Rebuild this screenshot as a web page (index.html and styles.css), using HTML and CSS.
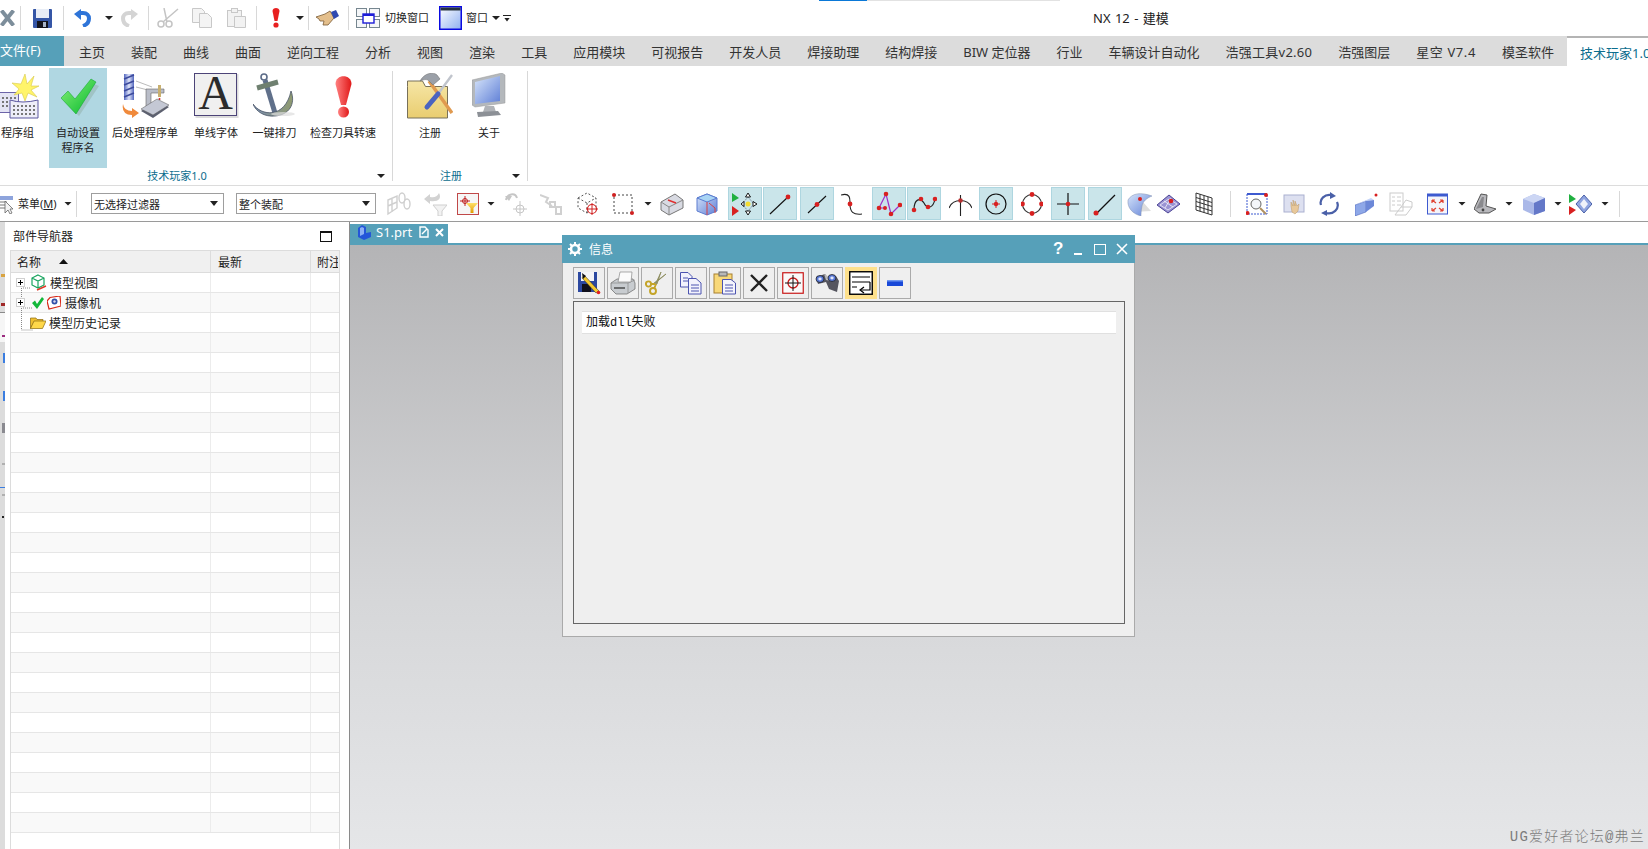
FILE: index.html
```html
<!DOCTYPE html>
<html lang="zh-CN">
<head>
<meta charset="utf-8">
<title>NX 12 - 建模</title>
<link rel="stylesheet" href="styles.css">
</head>
<body>
<div class="app">
  <svg width="0" height="0" class="defs">
    <defs>
      <linearGradient id="gGreen" x1="0" y1="0" x2="1" y2="1"><stop offset="0" stop-color="#8cf07a"/><stop offset="1" stop-color="#00b82a"/></linearGradient>
      <linearGradient id="gBlue" x1="0" y1="0" x2="1" y2="1"><stop offset="0" stop-color="#d6e4fa"/><stop offset="1" stop-color="#5f7fd6"/></linearGradient>
      <linearGradient id="gWin" x1="0" y1="0" x2="1" y2="1"><stop offset="0" stop-color="#ffffff"/><stop offset="1" stop-color="#8fb0f0"/></linearGradient>
      <linearGradient id="gRed" x1="0" y1="0" x2="1" y2="0"><stop offset="0" stop-color="#ff8080"/><stop offset="1" stop-color="#e01818"/></linearGradient>
      <linearGradient id="gDrill" x1="0" y1="0" x2="1" y2="0"><stop offset="0" stop-color="#5468c0"/><stop offset=".5" stop-color="#dfe4f8"/><stop offset="1" stop-color="#5468c0"/></linearGradient>
      <linearGradient id="gAnchor" x1="0" y1="0" x2="1" y2="0"><stop offset="0" stop-color="#7b8fb0"/><stop offset="1" stop-color="#8f9a70"/></linearGradient>
      <linearGradient id="gFolder" x1="0" y1="0" x2="0" y2="1"><stop offset="0" stop-color="#f6e6a6"/><stop offset="1" stop-color="#e9cd70"/></linearGradient>
      <linearGradient id="gGold" x1="0" y1="0" x2="0" y2="1"><stop offset="0" stop-color="#ffe16a"/><stop offset="1" stop-color="#e29a00"/></linearGradient>
    </defs>
  </svg>

  <header class="titlebar">
    <div class="line-indicator"></div>
    <div class="qa qa-logo">
      <svg width="15" height="16" viewBox="0 0 15 16"><path d="M1.5 0.5 13.5 15.5M13.5 0.5 1.5 15.5" stroke="#7d8e9b" stroke-width="4" fill="none"/></svg>
    </div>
    <div class="qa qa-save">
      <svg width="19" height="19" viewBox="0 0 19 19"><rect width="19" height="19" rx="1" fill="#3556a6"/><rect x="3" width="13" height="9" fill="#e8edf6"/><rect x="4" y="12" width="11" height="7" fill="#14141c"/><rect x="10" y="13" width="3" height="5" fill="#a8b4c8"/></svg>
    </div>
    <div class="qa qa-undo">
      <svg width="18" height="18" viewBox="0 0 18 18"><path d="M9 17C17 14 17 4 9 4H5" fill="none" stroke="#2e74d8" stroke-width="4"/><path d="M0 5 7 0V11Z" fill="#2e74d8"/></svg>
      <span class="caret nudge"></span>
      <svg width="18" height="18" viewBox="0 0 18 18"><path d="M9 17C1 14 1 4 9 4H13" fill="none" stroke="#d4d4d4" stroke-width="4"/><path d="M18 5 11 0V11Z" fill="#d4d4d4"/></svg>
    </div>
    <div class="qa qa-edit">
      <svg width="23" height="20" viewBox="0 0 23 20"><g fill="none" stroke="#c4c4c4" stroke-width="1.5"><circle cx="4" cy="16" r="3"/><circle cx="12" cy="16" r="3"/><path d="M6 14 21 1M10 14 7 0"/></g></svg>
      <svg width="23" height="20" viewBox="0 0 23 20"><g fill="#f4f4f4" stroke="#c8c8c8"><path d="M.5.5h9l3 3v11H.5z"/><path d="M7.5 5.5h8l4 4v10h-12z"/></g></svg>
      <svg width="20" height="20" viewBox="0 0 20 20"><g fill="#f2f2f2" stroke="#c8c8c8"><rect x=".5" y="2.5" width="14" height="16"/><rect x="4.5" y=".5" width="6" height="4"/><path d="M7.5 8.5h11v11h-11z"/></g></svg>
    </div>
    <div class="qa qa-check">
      <svg width="10" height="20" viewBox="0 0 10 20"><path d="M1.5 3C1.5-1 8.5-1 8.5 3L6.5 13H3.5Z" fill="#e82020"/><circle cx="5" cy="17" r="2.6" fill="#e82020"/></svg>
      <span class="caret"></span>
    </div>
    <div class="qa qa-hand">
      <svg width="23" height="16" viewBox="0 0 23 16"><path d="M0 7 9 4 14 1 18 8 12 15H7L8 11 4 11 3 9Z" fill="#e4bf8c" stroke="#7a5a36" stroke-width=".8"/><path d="M15 2 20 0 23 6 18 9Z" fill="#2f48b0"/></svg>
    </div>
    <div class="qa qa-window">
      <svg width="24" height="20" viewBox="0 0 24 20"><g fill="#f4f6f8" stroke="#76868f"><rect x=".5" y=".5" width="10" height="8"/><rect x="13.5" y=".5" width="10" height="8"/><rect x=".5" y="11.5" width="10" height="8"/><rect x="13.5" y="11.5" width="10" height="8"/></g><rect x="7" y="6" width="11" height="9" fill="#fff" stroke="#1c1cd8" stroke-width="1.4"/><rect x="7" y="6" width="11" height="2" fill="#1c1cd8"/></svg>
      <span class="qa-text">切换窗口</span>
      <svg class="g10" width="23" height="24" viewBox="0 0 23 24"><rect x=".75" y=".75" width="21.5" height="22.5" fill="url(#gWin)" stroke="#0a0ae0" stroke-width="1.5"/><rect x="1.5" y="1.5" width="20" height="3" fill="#26323c"/></svg>
      <span class="qa-text g4">窗口</span>
      <span class="caret g4"></span>
      <span class="more g3"></span>
    </div>
    <div class="app-title">NX 12 - 建模</div>
  </header>

  <nav class="tabs">
    <div class="tab-file">文件(F)</div>
    <div class="tab-list">
      <span class="tab">主页</span><span class="tab">装配</span><span class="tab">曲线</span><span class="tab">曲面</span><span class="tab">逆向工程</span><span class="tab">分析</span><span class="tab">视图</span><span class="tab">渲染</span><span class="tab">工具</span><span class="tab">应用模块</span><span class="tab">可视报告</span><span class="tab">开发人员</span><span class="tab">焊接助理</span><span class="tab">结构焊接</span><span class="tab">BIW 定位器</span><span class="tab">行业</span><span class="tab">车辆设计自动化</span><span class="tab tab-ver">浩强工具v2.60</span><span class="tab">浩强图层</span><span class="tab tab-star">星空 V7.4</span><span class="tab">模圣软件</span><span class="tab tab-active">技术玩家1.0</span>
    </div>
  </nav>

  <section class="ribbon">
    <div class="rgroup rgroup-main">
      <div class="ritems">
        <div class="ritem r-prog">
          <div class="ricon"><svg width="43" height="46" viewBox="0 0 43 46"><path d="M0.5 19.5h22v20H0.5z" fill="#e4e4f4" stroke="#6c64a8"/><path d="M2 25h18M2 29h18M2 33h18" stroke="#777" stroke-width="2" stroke-dasharray="2 2"/><path d="M14 27q12 4 28 0v18H14z" fill="#eeeef8" stroke="#5c58a0"/><path d="M17 33h22M17 37h22M17 41h22" stroke="#777" stroke-width="2" stroke-dasharray="2 2"/><path d="M29 1 31 11 38 3 35 13 43 13 35 17 41 24 32 20 29 28 26 20 18 22 23 16 16 10 25 11Z" fill="#fff46a" stroke="#d6c84a" stroke-width=".6"/></svg></div>
          <div class="rlabel">程序组</div>
        </div>
        <div class="ritem r-auto">
          <div class="ricon ricon-check"><svg width="40" height="38" viewBox="0 0 40 38"><path d="M3 23 10 17 17 26 33 6 38 8 18 38Z" fill="#8fb0a8" opacity=".5"/><path d="M0 20 7 13 14 21 30 1 35 4 15 36Z" fill="url(#gGreen)" stroke="#0ba02a" stroke-width=".5"/></svg></div>
          <div class="rlabel">自动设置</div><div class="rlabel">程序名</div>
        </div>
        <div class="ritem r-post">
          <div class="ricon"><svg width="47" height="46" viewBox="0 0 47 46"><rect x="2" y="1" width="10" height="26" fill="url(#gDrill)"/><path d="M2 6 12 2M2 12 12 8M2 18 12 14M2 24 12 20" stroke="#3c4a9c" stroke-width="1.4"/><path d="M14 8 30 14M14 14 30 18" stroke="#bbb"/><path d="M24 37V16H42V20H29V34Z" fill="#b9bdc8" stroke="#666" stroke-width=".6"/><rect x="36" y="12" width="3" height="12" fill="#c8b070"/><circle cx="37.500" cy="26" r="1" fill="#d02020"/><path d="M19 38 35 28 47 34 31 45Z" fill="#5c6070"/><path d="M19 36 35 26 47 32 31 42Z" fill="#c4c8d4" stroke="#555" stroke-width=".5"/><path d="M1 31q1 7 9 7v-3l7 5-7 5v-3Q-1 42 1 31Z" fill="#f08a3c"/></svg></div>
          <div class="rlabel">后处理程序单</div>
        </div>
        <div class="ritem r-font">
          <div class="ricon"><svg class="svg-open" width="44" height="45" viewBox="0 0 44 45"><rect x="1.500" y="1" width="43" height="44" fill="#dcdcdc"/><rect x=".5" y=".5" width="42" height="42" fill="#f0f0f0" stroke="#4c4478"/><text x="21.500" y="36" text-anchor="middle" class="glyph-a">A</text></svg></div>
          <div class="rlabel">单线字体</div>
        </div>
        <div class="ritem r-anchor">
          <div class="ricon"><svg width="43" height="44" viewBox="0 0 43 44"><circle cx="11" cy="4" r="3" fill="none" stroke="#5c6c88" stroke-width="1.6"/><path d="M12 7 22 40" stroke="#60708a" stroke-width="5"/><path d="M4 15 25 9" stroke="#6f8070" stroke-width="5"/><path d="M0 31C8 43 32 46 38 18 43 31 36 42 22 43 12 44 3 39 0 31Z" fill="url(#gAnchor)" stroke="#4a5668" stroke-width=".8"/><ellipse cx="30" cy="41" rx="12" ry="2" fill="#ddd" opacity=".7"/></svg></div>
          <div class="rlabel">一键排刀</div>
        </div>
        <div class="ritem r-speed">
          <div class="ricon ricon-bang"><svg width="17" height="42" viewBox="0 0 17 42"><path d="M.5 8C.5-2.500 16.500-2.500 16.500 8L11 29H6Z" fill="url(#gRed)"/><circle cx="8.500" cy="36" r="5.500" fill="url(#gRed)"/></svg></div>
          <div class="rlabel">检查刀具转速</div>
        </div>
      </div>
      <div class="rgroup-label"><span class="rgroup-name">技术玩家1.0</span><span class="caret"></span></div>
    </div>
    <div class="rsep"></div>
    <div class="rgroup rgroup-reg">
      <div class="ritems">
        <div class="ritem r-reg">
          <div class="ricon"><svg width="46" height="46" viewBox="0 0 46 46"><path d="M.5 13.500V8h15l3 5.500h22V45H.5Z" fill="url(#gFolder)" stroke="#77705a"/><path d="M45 40 22 8" stroke="#e09a50" stroke-width="3.500"/><path d="M13 8C18-1 27-1 30 2L33 6 26 12 21 7C18 6 16 7 13 8Z" fill="#9ba0a8" stroke="#666" stroke-width=".5"/><path d="M45 2 31 21" stroke="#c0c4cc" stroke-width="2.400"/><path d="M31 21 20 34" stroke="#4a64c0" stroke-width="5" stroke-linecap="round"/></svg></div>
          <div class="rlabel">注册</div>
        </div>
        <div class="ritem r-about">
          <div class="ricon"><svg width="34" height="45" viewBox="0 0 34 45"><path d="M0 7 30 0 33 2V30L3 34 0 32Z" fill="#b4b8bc" stroke="#999" stroke-width=".5"/><path d="M3 9 28 3V28L3 31Z" fill="url(#gBlue)"/><path d="M13 33H22L24 39H11Z" fill="#b0b3b8"/><path d="M5 39 26 38 29 42 6 44Z" fill="#8c9096"/></svg></div>
          <div class="rlabel">关于</div>
        </div>
      </div>
      <div class="rgroup-label"><span class="rgroup-name">注册</span><span class="caret"></span></div>
    </div>
    <div class="rsep"></div>
  </section>

  <section class="toolbar">
    <svg width="13" height="20" viewBox="0 0 13 20"><rect y="2" width="13" height="4" fill="#8ea4dc"/><path d="M0 8h7M0 11h7M0 14h7" stroke="#777"/><path d="M5 7 5 19 8 16 10 20 12 19 10 15 13 15Z" fill="#f4f4f4" stroke="#666" stroke-width=".8"/></svg>
    <span class="tb-text g5">菜单(<u>M</u>)</span>
    <span class="caret g6"></span>
    <span class="tsep g4"></span>
    <div class="combo combo-filter g14"><span>无选择过滤器</span><i class="combo-caret"></i></div>
    <div class="combo combo-scope g12"><span>整个装配</span><i class="combo-caret"></i></div>
    <svg class="g11" width="24" height="24" viewBox="0 0 24 24"><g fill="none" stroke="#cfcfcf" stroke-width="1.400"><path d="M1 8 10 4V16L1 22ZM1 14 10 10M5 6V20"/><ellipse cx="15" cy="6" rx="3" ry="5"/><ellipse cx="20" cy="12" rx="3" ry="5"/></g></svg>
    <svg class="g13" width="23" height="24" viewBox="0 0 23 24"><path d="M15 1C18 7 14 10 6 9V12L0 7 6 2V5C10 6 13 5 15 1Z" fill="#d2d2d2"/><path d="M9 13H23L18 19V24H14V19Z" fill="#f2f2f2" stroke="#cfcfcf"/></svg>
    <div class="g10 box-red"><svg width="20" height="20" viewBox="0 0 20 20"><path d="M2 7H12M7 2V12" stroke="#c02020"/><circle cx="7" cy="7" r="2.500" fill="none" stroke="#c02020"/><path d="M8 9H20L15.500 14V19H12.500V14Z" fill="url(#gGold)"/></svg></div>
    <span class="caret g8"></span>
    <svg class="g10" width="22" height="24" viewBox="0 0 22 24"><path d="M1 8C2 2 10 0 12 6" fill="none" stroke="#c6c6c6" stroke-width="2"/><path d="M0 4 4 9 7 4Z" fill="#c6c6c6"/><g fill="none" stroke="#c6c6c6"><circle cx="15" cy="17" r="4"/><path d="M15 9V24M8 17H22"/></g></svg>
    <svg class="g13" width="23" height="24" viewBox="0 0 23 24"><g fill="none" stroke="#d0d0d0" stroke-width="2"><path d="M0 3 8 6 6 10 12 14"/><rect x="10" y="10" width="5" height="5"/><rect x="16" y="15" width="5" height="7"/></g></svg>
    <svg class="g14" width="21" height="24" viewBox="0 0 21 24"><g fill="none" stroke="#555" stroke-dasharray="2 2"><path d="M1 6 10 1 19 6V16L10 21 1 16ZM1 6 10 11 19 6M10 11V21"/></g><circle cx="15" cy="17" r="4.500" fill="#fff" stroke="#d02020" stroke-width="1.200"/><path d="M15 11V23M9 17H21" stroke="#d02020"/></svg>
    <svg class="g14" width="22" height="24" viewBox="0 0 22 24"><rect x="2" y="3" width="18" height="18" fill="none" stroke="#444" stroke-dasharray="2 2"/><circle cx="2" cy="3" r="2" fill="#d02020"/><circle cx="20" cy="21" r="2" fill="#d02020"/></svg>
    <span class="caret g10"></span>
    <svg class="g8" width="24" height="24" viewBox="0 0 24 24"><path d="M1 10 15 2 23 8V16L9 23 1 18Z" fill="#d8dae2" stroke="#777"/><path d="M1 10 9 15V23M9 15 23 8" fill="none" stroke="#888"/><path d="M8 8 16 11" stroke="#e03030" stroke-width="1.600"/></svg>
    <svg class="g12" width="22" height="24" viewBox="0 0 22 24"><path d="M1 6 11 2 21 6V19L11 23 1 19Z" fill="url(#gBlue)" stroke="#5c7cd0"/><path d="M1 6 11 10 21 6 11 2Z" fill="#a8d4f4" stroke="#5c7cd0"/><path d="M11 10V23M13 11 19 16V21" fill="none" stroke="#d84040"/></svg>
    <div class="hl g10"><svg width="26" height="26" viewBox="0 0 26 26"><path d="M0 2 7 7 0 11Z" fill="#20b040"/><path d="M0 15 7 20 0 25Z" fill="#d82020"/><path d="M16 6 22 13 16 20 10 13Z" fill="none" stroke="#8090a0" stroke-dasharray="2 1"/><circle cx="16" cy="13" r="2.500" fill="#f4dc30"/><path d="M16 2 13.500 6H18.500ZM16 24 13.500 20H18.500ZM9 13 12 10.500V15.500ZM25 13 21 10.500V15.500Z" fill="#fff" stroke="#000" stroke-width=".9"/></svg></div>
    <div class="hl g1"><svg width="24" height="24" viewBox="0 0 24 24"><path d="M2 22 21 4" stroke="#111" stroke-width="1.100"/><circle cx="20" cy="5" r="2.400" fill="#d82020"/></svg></div>
    <div class="hl g3"><svg width="24" height="24" viewBox="0 0 24 24"><path d="M3 21 21 4" stroke="#111" stroke-width="1.100"/><circle cx="12" cy="12.500" r="2.400" fill="#d82020"/></svg></div>
    <svg class="g7" width="21" height="24" viewBox="0 0 21 24"><path d="M0 3C10 0 9 8 9 12 9 20 12 23 21 22" fill="none" stroke="#222" stroke-width="1.100"/><circle cx="9" cy="12" r="2.400" fill="#d82020"/></svg>
    <div class="hl g10"><svg width="26" height="26" viewBox="0 0 26 26"><path d="M3 17 10 3 15 23 24 14" fill="none" stroke="#a030c8" stroke-width="1.200"/><path d="M3 17H10" stroke="#a030c8"/><g fill="#d82020"><circle cx="3" cy="17" r="2.300"/><circle cx="10" cy="3" r="2.300"/><circle cx="15" cy="23" r="2.300"/><circle cx="24" cy="14" r="2.300"/><circle cx="9" cy="17" r="2"/></g></svg></div>
    <div class="hl g1"><svg width="26" height="26" viewBox="0 0 26 26"><path d="M3 19C3 8 9 6 13 12 16 18 22 18 24 8" fill="none" stroke="#222" stroke-width="1.200"/><g fill="#d82020"><circle cx="3" cy="19" r="2.300"/><circle cx="10" cy="8" r="2.300"/><circle cx="17" cy="16" r="2.300"/><circle cx="24" cy="8" r="2.300"/></g></svg></div>
    <svg class="g8" width="23" height="24" viewBox="0 0 23 24"><path d="M0 16C4 6 19 6 23 16M11.500 3V24" fill="none" stroke="#222" stroke-width="1.100"/><circle cx="11.500" cy="8.500" r="2.300" fill="#b83030"/></svg>
    <div class="hl g7"><svg width="24" height="24" viewBox="0 0 24 24"><circle cx="12" cy="12" r="10" fill="none" stroke="#111" stroke-width="1.200"/><path d="M12 8V16M8 12H16" stroke="#d82020"/><circle cx="12" cy="12" r="2.200" fill="#d82020"/></svg></div>
    <svg class="g8" width="22" height="24" viewBox="0 0 22 24"><circle cx="11" cy="12" r="9.500" fill="none" stroke="#333" stroke-width="1.100"/><g fill="#d82020"><circle cx="11" cy="2.500" r="2.400"/><circle cx="11" cy="21.500" r="2.400"/><circle cx="1.500" cy="12" r="2.400"/><circle cx="20.500" cy="12" r="2.400"/></g></svg>
    <div class="hl g8"><svg width="24" height="24" viewBox="0 0 24 24"><path d="M12 1V23M1 12H23" stroke="#111" stroke-width="1.200"/><circle cx="12" cy="12" r="2.300" fill="#d82020"/></svg></div>
    <div class="hl g3"><svg width="26" height="24" viewBox="0 0 26 24"><path d="M4 22 23 3" stroke="#111" stroke-width="1.200"/><circle cx="4" cy="21" r="2.500" fill="#d82020"/></svg></div>
    <svg class="g5" width="25" height="24" viewBox="0 0 25 24"><path d="M6 20 24 19 15 9Z" fill="#ddd"/><path d="M1 8C5 1 14 0 25 4 20 6 16 9 15 14 14 19 14 22 14 24 6 22 0 16 1 8Z" fill="url(#gBlue)" stroke="#8090b0" stroke-width=".5"/><circle cx="13" cy="7" r="2" fill="#d82020"/></svg>
    <svg class="g5" width="23" height="24" viewBox="0 0 23 24"><path d="M0 13 12 3 23 12 11 21Z" fill="#9a94d4" stroke="#4c4494"/><path d="M3 13 12 7 20 12 11 18ZM7 9 16 15M14 6 8 16" fill="none" stroke="#fff" stroke-width=".7"/><circle cx="14" cy="9" r="2.300" fill="#d82020"/></svg>
    <svg class="g15" width="18" height="24" viewBox="0 0 18 24"><g fill="none" stroke="#333"><path d="M1 1 17 6V23L1 18ZM1 5.500 17 10.500M1 9.500 17 14.500M1 14 17 19M5 2.300V19.300M9 3.500V20.500M13 4.800V21.800"/></g></svg>
    <span class="tsep g17"></span>
    <svg class="g15" width="22" height="24" viewBox="0 0 22 24"><rect x="1" y="2" width="20" height="20" fill="#fff" stroke="#3d5ad0" stroke-dasharray="2 1"/><rect x="1" y="1" width="20" height="2" fill="#3d5ad0"/><circle cx="10" cy="12" r="5" fill="#f4f6fa" stroke="#666"/><path d="M14 16 20 22" stroke="#b09060" stroke-width="2"/><circle cx="20" cy="3" r="2" fill="#d82020"/><circle cx="1.500" cy="21" r="2" fill="#d82020"/></svg>
    <svg class="g15" width="22" height="24" viewBox="0 0 22 24"><rect x="1" y="3" width="20" height="17" fill="#dde0f0" stroke="#aab0d0"/><path d="M8 14V10L10 14V8L12 14V9L14 14 16 12 15 19 12 22 9 20Z" fill="#e8c89a" stroke="#b89868" stroke-width=".5"/></svg>
    <svg class="g13" width="22" height="24" viewBox="0 0 22 24"><path d="M3 13C1 7 7 2 13 3M19 10C22 17 15 23 8 21" fill="none" stroke="#4a60a8" stroke-width="2.200"/><path d="M12 0 18 4 12 7ZM9 18 3 21 9 24Z" fill="#4a60a8"/></svg>
    <svg class="g15" width="23" height="24" viewBox="0 0 23 24"><path d="M0 13 11 9V20L0 24Z" fill="#8ea8e8" stroke="#3d56b0" stroke-width=".5"/><path d="M0 13 16 6 19 8 11 9Z" fill="#c4d4f8"/><path d="M11 9 19 8V14L11 20Z" fill="#6c88d8"/><circle cx="21" cy="3" r="1.500" fill="#d82020"/></svg>
    <svg class="g11" width="24" height="24" viewBox="0 0 24 24"><g fill="none" stroke="#cccccc"><rect x="1" y="1" width="13" height="18"/><path d="M3 5H6M8 5H12M3 9H6M8 9H12M3 13H6M8 13H12"/><path d="M6 23 12 15H23L17 23ZM23 15V10L17 8 12 15"/></g></svg>
    <svg class="g14" width="21" height="24" viewBox="0 0 21 24"><rect x=".5" y="2" width="20" height="20" fill="#f4f4fa" stroke="#3d5ad0"/><rect x=".5" y="2" width="20" height="2.500" fill="#3d5ad0"/><path d="M5 8 9 11M5 8V11M5 8H8M16 8 12 11M16 8V11M16 8H13M5 19 9 16M5 19V16M5 19H8M16 19 12 16M16 19V16M16 19H13" fill="none" stroke="#e04030" stroke-width="1.200"/></svg>
    <span class="caret g10"></span>
    <svg class="g8" width="22" height="24" viewBox="0 0 22 24"><path d="M0 17 7 2 13 3 12 14 22 17 15 21 5 21Z" fill="#b8b8bc" stroke="#555"/><path d="M2 17 8 5 10 5 9 15Z" fill="#8a8a8e"/><circle cx="9" cy="18" r="1.400" fill="#444"/></svg>
    <span class="caret g9"></span>
    <svg class="g10" width="22" height="24" viewBox="0 0 22 24"><path d="M0 7 11 2 22 6V19L11 23 0 18Z" fill="#aab8e8"/><path d="M0 7 11 11 22 6 11 2Z" fill="#ccd6f4"/><path d="M11 11 22 6V19L11 23Z" fill="#6478c8"/></svg>
    <span class="caret g9"></span>
    <svg class="g7" width="23" height="24" viewBox="0 0 23 24"><path d="M0 2 7 7 0 11Z" fill="#20b040"/><path d="M0 14 7 18 0 23Z" fill="#d82020"/><path d="M15 3 23 12 15 21 7 12Z" fill="#8fa4e0" stroke="#4a60a8"/><path d="M15 7 19 12 15 17 11 12Z" fill="#f0f2fa"/></svg>
    <span class="caret g9"></span>
    <span class="tsep g10"></span>
  </section>

  <main class="workspace">
    <svg class="edge" width="5" height="627" viewBox="0 0 5 627"><rect width="5" height="627" fill="#dcdcdc"/><rect y="90" width="5" height="30" fill="#f6f6f6"/><rect y="90" width="5" height="1" fill="#8a8a8a"/><rect x="1" y="52" width="4" height="3" fill="#d9a441"/><rect x="1" y="81" width="4" height="3" fill="#a02828"/><rect x="2" y="113" width="3" height="2" fill="#9c2c80"/><rect x="3" y="131" width="2" height="10" fill="#3a7de0"/><rect x="3" y="169" width="2" height="10" fill="#3a7de0"/><rect x="2" y="201" width="3" height="10" fill="#8a8a90"/><rect x="2" y="241" width="3" height="2" fill="#b0b0b0"/><rect y="265" width="5" height="1" fill="#3a7de0"/><rect x="2" y="272" width="3" height="2" fill="#b0b0b0"/><rect x="2" y="294" width="2" height="2" fill="#222"/></svg>

    <aside class="panel">
      <div class="panel-head">
        <span>部件导航器</span>
        <span class="panel-max"></span>
      </div>
      <div class="grid">
        <svg class="tree-lines" width="20" height="60" viewBox="0 0 20 60"><path d="M8.500 0V52H20M10 10H18M10 30H20" fill="none" stroke="#8a8a8a" stroke-dasharray="1 1"/></svg>
        <div class="row row-head"><div class="cell">名称<i class="sort"></i></div><div class="cell cell-new">最新</div><div class="cell cell-note">附注</div></div>
        <div class="row"><div class="cell"><span class="plus"></span>
          <svg class="g5" width="17" height="17" viewBox="0 0 17 17"><path d="M8 1 14 4V11L8 14 2 11V4ZM2 4 8 7 14 4M8 7V14" fill="none" stroke="#1aa560" stroke-width="1.200"/><path d="M7 16 16 12" stroke="#e03828" stroke-width="1.400"/></svg>
          <span class="g3">模型视图</span></div><div class="cell"></div><div class="cell"></div></div>
        <div class="row"><div class="cell"><span class="plus"></span>
          <svg class="g7" width="12" height="12" viewBox="0 0 12 12"><path d="M0 6 3 3.500 5 7 10 0 12 2 5 12Z" fill="#12b83a"/></svg>
          <svg class="g3" width="14" height="14" viewBox="0 0 14 14"><path d="M3 1.500 13 0 14 10 2 13 0 5Z" fill="#fff" stroke="#d82818" stroke-width="1.200"/><circle cx="7.500" cy="5.500" r="3" fill="#3050a8"/><circle cx="7.500" cy="5.500" r="1.200" fill="#d8d8f0"/></svg>
          <span class="g4">摄像机</span></div><div class="cell"></div><div class="cell"></div></div>
        <div class="row"><div class="cell tree-leaf">
          <svg width="16" height="13" viewBox="0 0 16 13"><path d="M.5 12.500V2H6L7 3.500H13V6H4Z" fill="#f0c030" stroke="#8a6a10" stroke-width=".7"/><path d="M.5 12.500 4 5H16L12.500 12.500Z" fill="#ffd84a" stroke="#8a6a10" stroke-width=".7"/></svg>
          <span class="g3">模型历史记录</span></div><div class="cell"></div><div class="cell"></div></div>
        <div class="row"><div class="cell"></div><div class="cell"></div><div class="cell"></div></div>
        <div class="row"><div class="cell"></div><div class="cell"></div><div class="cell"></div></div>
        <div class="row"><div class="cell"></div><div class="cell"></div><div class="cell"></div></div>
        <div class="row"><div class="cell"></div><div class="cell"></div><div class="cell"></div></div>
        <div class="row"><div class="cell"></div><div class="cell"></div><div class="cell"></div></div>
        <div class="row"><div class="cell"></div><div class="cell"></div><div class="cell"></div></div>
        <div class="row"><div class="cell"></div><div class="cell"></div><div class="cell"></div></div>
        <div class="row"><div class="cell"></div><div class="cell"></div><div class="cell"></div></div>
        <div class="row"><div class="cell"></div><div class="cell"></div><div class="cell"></div></div>
        <div class="row"><div class="cell"></div><div class="cell"></div><div class="cell"></div></div>
        <div class="row"><div class="cell"></div><div class="cell"></div><div class="cell"></div></div>
        <div class="row"><div class="cell"></div><div class="cell"></div><div class="cell"></div></div>
        <div class="row"><div class="cell"></div><div class="cell"></div><div class="cell"></div></div>
        <div class="row"><div class="cell"></div><div class="cell"></div><div class="cell"></div></div>
        <div class="row"><div class="cell"></div><div class="cell"></div><div class="cell"></div></div>
        <div class="row"><div class="cell"></div><div class="cell"></div><div class="cell"></div></div>
        <div class="row"><div class="cell"></div><div class="cell"></div><div class="cell"></div></div>
        <div class="row"><div class="cell"></div><div class="cell"></div><div class="cell"></div></div>
        <div class="row"><div class="cell"></div><div class="cell"></div><div class="cell"></div></div>
        <div class="row"><div class="cell"></div><div class="cell"></div><div class="cell"></div></div>
        <div class="row"><div class="cell"></div><div class="cell"></div><div class="cell"></div></div>
        <div class="row"><div class="cell"></div><div class="cell"></div><div class="cell"></div></div>
        <div class="row"><div class="cell"></div><div class="cell"></div><div class="cell"></div></div>
        <div class="row"><div class="cell"></div><div class="cell"></div><div class="cell"></div></div>
        <div class="row"><div class="cell"></div><div class="cell"></div><div class="cell"></div></div>
      </div>
    </aside>

    <div class="stage">
      <div class="docbar">
        <div class="doctab">
          <svg width="15" height="15" viewBox="0 0 15 15"><path d="M1 3 5 0 9 2V8L14 7V12L7 15 1 12Z" fill="#2456d8"/><path d="M3 3 5 2 7 3V9L3 11Z" fill="#8cb0f4"/></svg>
          <span class="docname">S1.prt</span>
          <svg width="10" height="12" viewBox="0 0 10 12"><path d="M1 1H6L9 4V11H1Z" fill="#56a0b9" stroke="#fff" stroke-width="1.400"/><path d="M3 8 8 3" stroke="#fff" stroke-width="1.400"/></svg>
          <svg class="g6" width="9" height="9" viewBox="0 0 9 9"><path d="M1 1 8 8M8 1 1 8" stroke="#fff" stroke-width="2"/></svg>
        </div>
      </div>
      <div class="viewport"></div>

      <div class="dialog">
        <div class="dialog-title">
          <svg width="14" height="14" viewBox="0 0 14 14"><circle cx="7" cy="7" r="4" fill="none" stroke="#fff" stroke-width="2.600"/><path d="M7 0V3M7 11V14M0 7H3M11 7H14M2 2 4 4M10 10 12 12M12 2 10 4M4 10 2 12" stroke="#fff" stroke-width="2"/></svg>
          <span class="dialog-name">信息</span>
          <span class="dialog-help">?</span>
          <span class="dialog-min"></span>
          <span class="dialog-max"></span>
          <svg class="dialog-x" width="12" height="12" viewBox="0 0 12 12"><path d="M1 1 11 11M11 1 1 11" stroke="#fff" stroke-width="1.600"/></svg>
        </div>
        <div class="dialog-tools">
          <div class="dbtn"><svg width="24" height="24" viewBox="0 0 24 24"><rect x="1" y="1" width="19" height="20" fill="#2c48a0"/><rect x="4" y="1" width="13" height="9" fill="#f4f4f8"/><rect x="5" y="13" width="9" height="8" fill="#10101c"/><path d="M7 4 22 20 19 22 5 7Z" fill="#f4c830" stroke="#222" stroke-width=".5"/><path d="M5 2 9 5 6 8Z" fill="#111"/><circle cx="21.500" cy="21.500" r="1.800" fill="#e02020"/></svg></div>
          <div class="dbtn"><svg width="26" height="24" viewBox="0 0 26 24"><path d="M1 12 7 8H23L25 12V18L17 23H6L1 18Z" fill="#c8ccd0" stroke="#666" stroke-width=".7"/><path d="M1 12H18L25 9M18 12V22" fill="none" stroke="#888" stroke-width=".7"/><path d="M10 1H22L21 11H8Z" fill="#fbfbfb" stroke="#8a8a8a" stroke-width=".7"/><path d="M4 17H15" stroke="#444" stroke-width="1.400"/></svg></div>
          <div class="dbtn"><svg width="24" height="24" viewBox="0 0 24 24"><path d="M8 14 21 3 9 12ZM10 14 16 1 12 13Z" fill="#9c9c7c" stroke="#8a8a5a" stroke-width=".8"/><g fill="none" stroke="#c4a428" stroke-width="1.900"><circle cx="8" cy="20" r="3"/><circle cx="3.500" cy="13" r="2.600"/><path d="M9 18 11 13M6 13 10 13"/></g></svg></div>
          <div class="dbtn"><svg width="22" height="24" viewBox="0 0 22 24"><g fill="#f2f2fc" stroke="#4c54b0"><path d="M.5 1.500H8L12 5.500V16H.5Z"/><path d="M8.500 7.500H16L21 12V23H8.500Z"/></g><path d="M3 7H8M3 10H8M11 14H19M11 17H19M11 20H19" stroke="#4c54b0"/></svg></div>
          <div class="dbtn"><svg width="24" height="24" viewBox="0 0 24 24"><rect x="1" y="3" width="18" height="19" fill="#f8d878" stroke="#a88030"/><rect x="6" y="1" width="8" height="4" fill="#b8b8b8" stroke="#666"/><path d="M9.500 8.500H18L22.500 12V23H9.500Z" fill="#f4f4fc" stroke="#4c54b0"/><path d="M12 14H20M12 17H20M12 20H20" stroke="#4c54b0"/></svg></div>
          <div class="dbtn"><svg width="20" height="20" viewBox="0 0 20 20"><path d="M2 2 18 18M18 2 2 18" stroke="#222" stroke-width="2.400"/></svg></div>
          <div class="dbtn"><svg width="22" height="22" viewBox="0 0 22 22"><rect x=".75" y=".75" width="20.500" height="20.500" fill="#fafafa" stroke="#c81818" stroke-width="1.200"/><circle cx="11" cy="11" r="5" fill="none" stroke="#c81818" stroke-width="1.300"/><path d="M11 3V19M3 11H19" stroke="#111"/></svg></div>
          <div class="dbtn"><svg width="24" height="22" viewBox="0 0 24 22"><path d="M1 5 10 2 13 6 21 4 24 9 22 20 14 17 11 10 3 12Z" fill="#55555f"/><path d="M9 2 14 5 16 9 11 8Z" fill="#bbb"/><ellipse cx="5" cy="7" rx="4" ry="3.500" fill="#5878d8" stroke="#222" stroke-width=".8"/><ellipse cx="17" cy="6" rx="4" ry="3.500" fill="#5878d8" stroke="#222" stroke-width=".8"/><ellipse cx="5" cy="7" rx="1.700" ry="1.400" fill="#dfe6fa"/><ellipse cx="17" cy="6" rx="1.700" ry="1.400" fill="#dfe6fa"/></svg></div>
          <div class="dbtn dbtn-on"><svg width="24" height="24" viewBox="0 0 24 24"><rect x=".75" y=".75" width="22.500" height="22.500" fill="#fff" stroke="#000" stroke-width="1.400"/><path d="M3 6H21M3 11H21M3 16H8" stroke="#000" stroke-width="1.200"/><path d="M21 11V19H12" fill="none" stroke="#000" stroke-width="1.200"/><path d="M15 16 11 19 15 22" fill="none" stroke="#000" stroke-width="1.200"/></svg></div>
          <div class="dbtn"><svg width="16" height="6" viewBox="0 0 16 6"><rect width="16" height="6" fill="#1848d8"/><rect width="16" height="1.500" fill="#7098f0"/></svg></div>
        </div>
        <div class="dialog-frame">
          <div class="dialog-line">加载dll失败</div>
        </div>
      </div>

      <div class="watermark">UG爱好者论坛@弗兰</div>
    </div>
  </main>
</div>
</body>
</html>
```

FILE: styles.css
```css
* { box-sizing: border-box; }
html, body { margin: 0; padding: 0; }
body {
  font-family: "Noto Sans", "Noto Sans CJK SC", sans-serif;
  font-size: 11px;
  color: #222;
  background: #fff;
}
svg { display: block; flex: none; }
.defs { position: absolute; }
.svg-open { overflow: visible; }

.app {
  width: 1648px;
  height: 849px;
  overflow: hidden;
  display: flex;
  flex-direction: column;
  position: relative;
}

/* spacing helpers for the icon strips */
.g1 { margin-left: 1px; } .g3 { margin-left: 3px; } .g4 { margin-left: 4px; }
.g5 { margin-left: 5px; } .g6 { margin-left: 6px; } .g7 { margin-left: 7px; }
.g8 { margin-left: 8px; } .g9 { margin-left: 9px; } .g10 { margin-left: 10px; }
.g11 { margin-left: 11px; } .g12 { margin-left: 12px; } .g13 { margin-left: 13px; }
.g14 { margin-left: 14px; } .g15 { margin-left: 15px; } .g17 { margin-left: 17px; }

.caret {
  display: block;
  flex: none;
  width: 8px;
  height: 4px;
  background: #222;
  clip-path: polygon(0 0, 100% 0, 50% 100%);
}

/* title bar */
.titlebar {
  height: 36px;
  flex: none;
  display: flex;
  align-items: center;
  position: relative;
}
.line-indicator {
  position: absolute;
  left: 819px;
  top: 0;
  width: 241px;
  height: 1px;
  background: linear-gradient(to right, #0a78d7 48px, #e2e2e2 48px);
}
.qa {
  height: 24px;
  display: flex;
  align-items: center;
  border-right: 1px solid #d8d8d8;
  flex: none;
}
.qa-logo { width: 21px; }
.qa-save { width: 43px; justify-content: center; }
.qa-undo { width: 85px; padding-left: 10px; gap: 7px; }
.qa-undo .nudge { margin-left: 6px; }
.qa-edit { width: 108px; padding-left: 8px; gap: 12px; }
.qa-check { width: 52px; padding-left: 14px; gap: 15px; }
.qa-hand { width: 40px; padding-left: 7px; }
.qa-window { border-right: 0; padding-left: 7px; }
.qa-text { font-size: 11px; line-height: 16px; color: #222; margin-left: 5px; }
.qa-text.g4 { margin-left: 4px; }
.more {
  display: block;
  width: 8px;
  height: 7px;
  border-top: 1px solid #222;
  position: relative;
}
.more::after {
  content: "";
  position: absolute;
  left: 1px;
  top: 2px;
  width: 6px;
  height: 4px;
  background: #222;
  clip-path: polygon(0 0, 100% 0, 50% 100%);
}
.app-title {
  margin-left: 582px;
  font-size: 13px;
  line-height: 18px;
  word-spacing: 1px;
  color: #222;
  white-space: nowrap;
}

/* ribbon tabs */
.tabs {
  height: 30px;
  flex: none;
  display: flex;
  background: #dcdcdc;
  overflow: hidden;
}
.tab-file {
  width: 64px;
  flex: none;
  background: #56a0b9;
  color: #fff;
  font-size: 13px;
  line-height: 28px;
}
.tab-list {
  display: flex;
  padding-left: 2px;
  flex: none;
}
.tab {
  padding: 0 13px;
  font-size: 13px;
  line-height: 32px;
  color: #333;
  white-space: nowrap;
}
.tab-ver { letter-spacing: .25px; }
.tab-star { letter-spacing: .6px; }
.tab-active {
  background: #fff;
  color: #0b6d8e;
  border-top: 2px solid #b4b4b4;
  line-height: 30px;
}

/* ribbon */
.ribbon {
  height: 120px;
  flex: none;
  display: flex;
  border-bottom: 1px solid #dcdcdc;
}
.rgroup { display: flex; flex-direction: column; flex: none; }
.rgroup-main { width: 415px; margin-left: -23px; }
.rgroup-reg { width: 134px; }
.ritems { display: flex; height: 102px; padding-top: 2px; }
.ritem {
  height: 100px;
  flex: none;
  display: flex;
  flex-direction: column;
  align-items: center;
  padding-top: 5px;
}
.ricon {
  height: 46px;
  margin-bottom: 6px;
  display: flex;
  align-items: flex-start;
  justify-content: center;
}
.ricon-check { padding-top: 5px; padding-left: 5px; }
.ricon-bang { padding-top: 3px; }
.rlabel {
  font-size: 11px;
  line-height: 15px;
  color: #222;
  white-space: nowrap;
}
.r-prog { width: 63px; margin-left: 9px; }
.r-auto { width: 58px; background: #b0d7e2; }
.r-post { width: 76px; }
.r-font { width: 66px; }
.r-anchor { width: 51px; }
.r-speed { width: 86px; }
.r-reg { width: 60px; margin-left: 7px; }
.r-about { width: 58px; }
.glyph-a {
  font-family: "Liberation Serif", serif;
  font-size: 48px;
  fill: #2c2c2c;
}
.rgroup-label {
  height: 16px;
  display: flex;
  align-items: center;
  color: #0b6d8e;
  line-height: 16px;
  padding-right: 7px;
}
.rgroup-name { flex: 1; text-align: center; }
.rgroup-reg .rgroup-name { padding-right: 3px; }
.rsep {
  width: 1px;
  height: 110px;
  margin-top: 5px;
  background: #d8d8d8;
  flex: none;
}

/* selection toolbar */
.toolbar {
  height: 36px;
  flex: none;
  display: flex;
  align-items: center;
  border-bottom: 1px solid #9a9a9a;
}
.tb-text { font-size: 11px; line-height: 16px; width: 40px; white-space: nowrap; }
.tsep { width: 1px; height: 26px; background: #d8d8d8; flex: none; }
.combo {
  height: 21px;
  border: 1px solid #9e9e9e;
  background: #fff;
  display: flex;
  align-items: center;
  justify-content: space-between;
  padding: 0 5px 0 2px;
  font-size: 11px;
  flex: none;
}
.combo-filter { width: 133px; }
.combo-scope { width: 140px; }
.combo-caret {
  display: block;
  width: 8px;
  height: 5px;
  background: #222;
  clip-path: polygon(0 0, 100% 0, 50% 100%);
}
.box-red {
  width: 22px;
  height: 22px;
  border: 1px solid #c04848;
  background: #f6f6f6;
  flex: none;
}
.hl {
  width: 34px;
  height: 33px;
  flex: none;
  border: 1px solid #aed6e0;
  background: #cae5ea;
  display: flex;
  align-items: center;
  justify-content: center;
}

/* workspace */
.workspace {
  flex: 1;
  min-height: 0;
  display: flex;
}
.edge { flex: none; }
.panel {
  width: 345px;
  flex: none;
  background: #fff;
  border-right: 1px solid #8a8a8a;
  display: flex;
  flex-direction: column;
  overflow: hidden;
}
.panel-head {
  height: 28px;
  flex: none;
  display: flex;
  align-items: center;
  justify-content: space-between;
  padding: 0 17px 0 8px;
  font-size: 12px;
  color: #222;
}
.panel-max {
  display: block;
  width: 12px;
  height: 11px;
  border: 1px solid #111;
  border-top-width: 2px;
}
.grid {
  width: 330px;
  margin-left: 5px;
  border: 1px solid #dcdcdc;
  border-bottom: 0;
  position: relative;
  flex: 1;
  overflow: hidden;
}
.tree-lines { position: absolute; left: 2px; top: 27px; z-index: 1; pointer-events: none; }
.row {
  display: grid;
  grid-template-columns: 200px 100px 27px;
  height: 20px;
  border-bottom: 1px solid #e6e6e6;
}
.row:nth-child(even) { background: #f9f9f9; }
.row .cell {
  display: flex;
  align-items: center;
  border-right: 1px solid #ececec;
  padding-left: 5px;
  font-size: 12px;
  color: #222;
  white-space: nowrap;
  position: relative;
  z-index: 2;
  overflow: hidden;
}
.row .cell:last-child { border-right: 0; }
.row-head {
  height: 22px;
  background: #f0f0f0 !important;
  border-bottom: 1px solid #dcdcdc;
}
.row-head .cell { border-right-color: #dcdcdc; padding-left: 6px; }
.row-head .cell-new { padding-left: 7px; }
.sort {
  display: block;
  width: 9px;
  height: 5px;
  margin-left: 18px;
  background: #111;
  clip-path: polygon(50% 0, 100% 100%, 0 100%);
}
.plus {
  display: block;
  flex: none;
  width: 9px;
  height: 9px;
  border: 1px solid #d0d0d0;
  background: linear-gradient(#000, #000) center / 5px 1px no-repeat,
              linear-gradient(#000, #000) center / 1px 5px no-repeat,
              #fff;
}
.row .tree-leaf { padding-left: 19px; }

/* document area */
.stage {
  flex: 1;
  min-width: 0;
  position: relative;
  display: flex;
  flex-direction: column;
}
.docbar {
  height: 23px;
  flex: none;
  border-bottom: 2px solid #56a0b9;
  display: flex;
  align-items: flex-end;
}
.doctab {
  width: 98px;
  height: 21px;
  background: #56a0b9;
  color: #fff;
  display: flex;
  align-items: center;
  padding: 0 0 5px 7px;
  margin-bottom: -2px;
}
.docname {
  font-size: 13px;
  line-height: 17px;
  margin-left: 4px;
  margin-right: 7px;
  font-family: "Noto Sans", sans-serif;
}
.viewport {
  flex: 1;
  background: linear-gradient(#b4b4b6 0%, #d6d7d9 59%, #e5e6e8 100%);
}

/* information dialog */
.dialog {
  position: absolute;
  left: 212px;
  top: 13px;
  width: 573px;
  height: 402px;
  background: #efefef;
  border: 1px solid #aaa;
  border-top: 0;
  display: flex;
  flex-direction: column;
}
.dialog-title {
  height: 28px;
  flex: none;
  margin: 0 -1px;
  background: #56a0b9;
  color: #fff;
  display: flex;
  align-items: center;
  padding-left: 6px;
}
.dialog-name { font-size: 12px; margin-left: 7px; line-height: 16px; padding-top: 2px; height: 18px; }
.dialog-help {
  margin-left: auto;
  font-size: 17px;
  font-weight: 700;
  line-height: 16px;
  width: 10px;
  font-family: "Liberation Sans", sans-serif;
}
.dialog-min {
  display: block;
  width: 8px;
  height: 2px;
  background: #fff;
  margin: 9px 0 0 11px;
}
.dialog-max {
  display: block;
  width: 12px;
  height: 11px;
  border: 1px solid #fff;
  margin-left: 12px;
}
.dialog-x { margin: 0 7px 0 10px; }
.dialog-tools {
  display: flex;
  gap: 2px;
  padding: 4px 0 0 10px;
  flex: none;
}
.dbtn {
  width: 32px;
  height: 32px;
  border: 1px solid #aaa;
  background: #efefef;
  display: flex;
  align-items: center;
  justify-content: center;
  flex: none;
}
.dbtn-on { background: #fde08c; border-color: #fde08c; }
.dialog-frame {
  margin: 2px 9px 12px 10px;
  flex: 1;
  border: 1px solid #666;
  padding: 9px 8px 0 8px;
}
.dialog-line {
  height: 23px;
  background: #fff;
  border-top: 1px solid #e0e0e0;
  border-bottom: 1px solid #e0e0e0;
  padding: 2px 0 0 4px;
  font-family: "Liberation Mono", "Noto Sans CJK SC", monospace;
  font-size: 12px;
  line-height: 19px;
  color: #111;
}
.watermark {
  position: absolute;
  right: 3px;
  bottom: 3px;
  font-family: "Liberation Mono", "Noto Sans CJK SC", monospace;
  font-size: 14px;
  font-weight: 300;
  letter-spacing: 1.2px;
  line-height: 18px;
  color: #7c7c7c;
  white-space: nowrap;
}
```
